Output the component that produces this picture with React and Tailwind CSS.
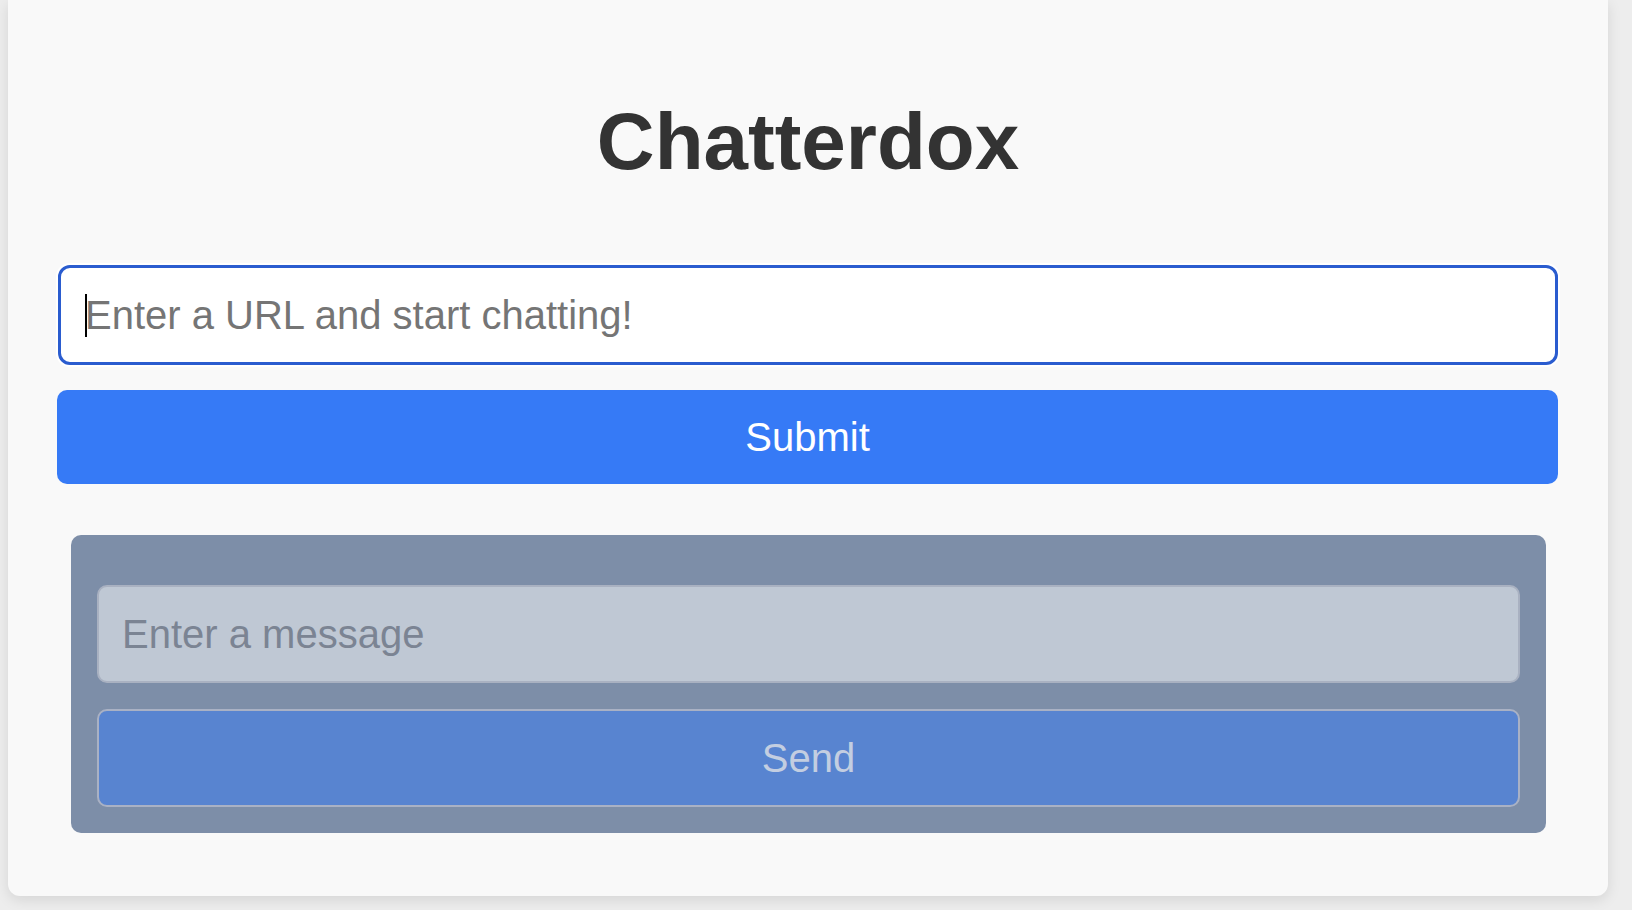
import React from "react";

const App = () => {
  return (
    <div className="h-[910px] w-full overflow-hidden bg-[#ededed] font-['Liberation_Sans',Arial,sans-serif]">
      {/* Card */}
      <div className="ml-[8px] w-[1600px] rounded-b-[12px] bg-[#f9f9f9] px-[49px] pt-[96px] pb-[63px] shadow-[0_4px_14px_rgba(0,0,0,0.1)]">
        <h1 className="text-center text-[80px] font-bold leading-[92px] text-[#333333]">Chatterdox</h1>

        {/* URL form */}
        <div className="relative mt-[77px] ml-[1px]">
          <input
            type="text"
            placeholder="Enter a URL and start chatting!"
            className="h-[100px] w-[1500px] rounded-[12px] border-[3px] border-[#2a5ccf] bg-white px-[24px] text-[40px] text-[#333] outline-none shadow-[0_0_0_2px_#ffffff] placeholder:text-[#757575]"
          />
          <span className="pointer-events-none absolute left-[27px] top-[29px] h-[43px] w-[2px] bg-black" />
        </div>
        <button className="mt-[25px] flex h-[94px] w-[1501px] items-center justify-center rounded-[10px] bg-[#367af6] text-[40px] text-white">
          Submit
        </button>

        {/* Chat box */}
        <div className="mx-[14px] mt-[51px] flex w-[1475px] flex-col gap-[26px] rounded-[10px] bg-[#7d8ea8] px-[26px] pt-[50px] pb-[26px]">
          <input
            type="text"
            disabled
            placeholder="Enter a message"
            className="h-[98px] w-full rounded-[10px] border-2 border-[#a9b1c1] bg-[#bfc8d4] px-[23px] text-[40px] outline-none placeholder:text-[#7b8493]"
          />
          <button
            disabled
            className="flex h-[98px] w-full items-center justify-center rounded-[10px] border-2 border-[#a9b1c4] bg-[#5884d0] text-[40px] text-[#c3cee1]"
          >
            Send
          </button>
        </div>
      </div>
    </div>
  );
};

export default App;
